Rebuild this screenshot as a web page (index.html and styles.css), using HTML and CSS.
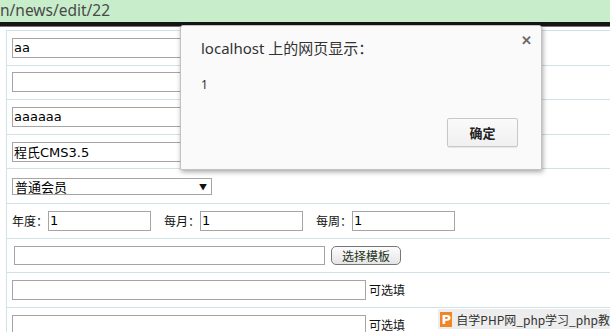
FILE: index.html
```html
<!DOCTYPE html>
<html lang="zh-CN">
<head>
<meta charset="UTF-8" />
<title>news edit</title>
<link rel="stylesheet" href="styles.css">
</head>
<body>
<div class="url-bar"><span class="url-text">n/news/edit/22</span></div>
<div class="url-edge"></div>

<div class="form-table">
  <div class="row"><input class="field" type="text" value="aa"></div>
  <div class="row"><input class="field" type="text" value=""></div>
  <div class="row"><input class="field" type="text" value="aaaaaa"></div>
  <div class="row"><input class="field" type="text" value="程氏CMS3.5"></div>
  <div class="row">
    <div class="select-box"><span>普通会员</span><span class="arrow">▼</span></div>
  </div>
  <div class="row">
    <label class="lbl">年度：</label><input class="small" type="text" value="1">
    <label class="lbl gap">每月：</label><input class="small" type="text" value="1">
    <label class="lbl gap">每周：</label><input class="small" type="text" value="1">
  </div>
  <div class="row">
    <input class="field tpl" type="text" value="">
    <button class="pick-btn">选择模板</button>
  </div>
  <div class="row">
    <input class="field wide" type="text" value=""><span class="hint">可选填</span>
  </div>
  <div class="row">
    <input class="field wide" type="text" value=""><span class="hint">可选填</span>
  </div>
</div>

<div class="dialog">
  <div class="dialog-title">localhost 上的网页显示：</div>
  <span class="dialog-close">✕</span>
  <div class="dialog-msg">1</div>
  <div class="dialog-foot"><button class="ok-btn">确定</button></div>
</div>

<div class="watermark">
  <span class="wm-icon">P</span><span class="wm-text">自学PHP网_php学习_php教</span>
</div>
</body>
</html>
```

FILE: styles.css
```css
body {
  margin: 0;
  width: 610px;
  height: 332px;
  overflow: hidden;
  background: #fff;
  font-family: "DejaVu Sans", "Noto Sans CJK SC", sans-serif;
  position: relative;
}
.url-bar {
  height: 22px;
  background: #c8edcb;
  overflow: hidden;
  white-space: nowrap;
}
.url-text {
  display: inline-block;
  font-family: "Noto Sans", sans-serif;
  font-size: 15.5px;
  line-height: 21px;
  color: #4a4a4a;
}
.url-edge {
  height: 4px;
  background: #151515;
  border-bottom: 1px solid #777;
}
/* form table */
.form-table {
  margin: 3px 0 0 6px;
  width: 604px;
  box-sizing: border-box;
  border-left: 1px solid #cfe2e6;
  border-top: 1px solid #cfe2e6;
}
.row {
  height: 33.6px;
  border-bottom: 1px solid #cfe2e6;
  display: flex;
  align-items: center;
  padding-left: 5px;
}
input {
  box-sizing: border-box;
  height: 20px;
  border: 1px solid #a5a5a5;
  padding: 0 1px;
  font-family: "DejaVu Sans", "Noto Sans CJK SC", sans-serif;
  font-size: 13px;
  color: #000;
  margin: 0;
}
.field {
  width: 354px;
}
.field.tpl {
  width: 311px;
  margin-left: 2px;
  height: 19px;
}
.field.wide {
  width: 354px;
}
.small {
  width: 103px;
}
.lbl {
  font-family: "Noto Sans CJK SC", sans-serif;
  font-size: 12px;
  color: #111;
}
.lbl.gap {
  margin-left: 13px;
}
.select-box {
  box-sizing: border-box;
  width: 200px;
  height: 17px;
  border: 1px solid #a5a5a5;
  display: flex;
  align-items: center;
  justify-content: space-between;
  padding: 0 4px 0 2px;
  font-family: "Noto Sans CJK SC", sans-serif;
  font-size: 13px;
  color: #000;
}
.arrow {
  font-size: 8px;
  color: #111;
}
.pick-btn {
  margin-left: 6px;
  width: 70px;
  height: 19px;
  border: 1px solid #777;
  border-radius: 5px;
  background: linear-gradient(#fdfdfd, #e4e4e4);
  font-family: "Noto Sans CJK SC", sans-serif;
  font-size: 12px;
  line-height: 15px;
  color: #1d3320;
  padding: 0;
}
.hint {
  margin-left: 3px;
  font-family: "Noto Sans CJK SC", sans-serif;
  font-size: 12px;
  color: #111;
}
/* alert dialog */
.dialog {
  position: absolute;
  left: 180px;
  top: 25px;
  width: 362px;
  height: 145px;
  box-sizing: border-box;
  background: #fafafa;
  border: 1px solid #c2c2c2;
  border-radius: 3px 3px 0 0;
  box-shadow: 1px 2px 5px rgba(0, 0, 0, 0.35);
  padding: 12px 0 0 20px;
  font-family: "Noto Sans", "Noto Sans CJK SC", sans-serif;
  color: #333;
}
.dialog-title {
  font-size: 15px;
  line-height: 20px;
}
.dialog-close {
  position: absolute;
  top: 5px;
  right: 9px;
  font-size: 13px;
  font-weight: bold;
  color: #6a6a6a;
}
.dialog-msg {
  margin-top: 19px;
  font-size: 12px;
  line-height: 16px;
}
.dialog-foot {
  display: flex;
  justify-content: flex-end;
  padding-right: 23px;
  margin-top: 25px;
}
.ok-btn {
  width: 71px;
  height: 29px;
  border: 1px solid #c8c8c8;
  border-radius: 2px;
  background: linear-gradient(#fafafa, #f0f0f0);
  box-shadow: 0 1px 1px rgba(0, 0, 0, 0.08);
  font-family: "Noto Sans CJK SC", sans-serif;
  font-size: 13px;
  font-weight: bold;
  color: #222;
  padding: 0;
}
/* watermark */
.watermark {
  position: absolute;
  left: 438px;
  top: 309px;
  width: 172px;
  height: 20px;
  background: rgba(236, 236, 236, 0.92);
  display: flex;
  align-items: center;
  white-space: nowrap;
}
.wm-icon {
  width: 14px;
  height: 15px;
  margin-left: 2px;
  background: #f0862a;
  color: #fff;
  font-family: "DejaVu Sans", sans-serif;
  font-weight: bold;
  font-size: 13px;
  line-height: 15px;
  text-align: center;
}
.wm-text {
  margin-left: 4px;
  font-family: "Noto Sans CJK SC", sans-serif;
  font-size: 12px;
  color: #333;
}
```
